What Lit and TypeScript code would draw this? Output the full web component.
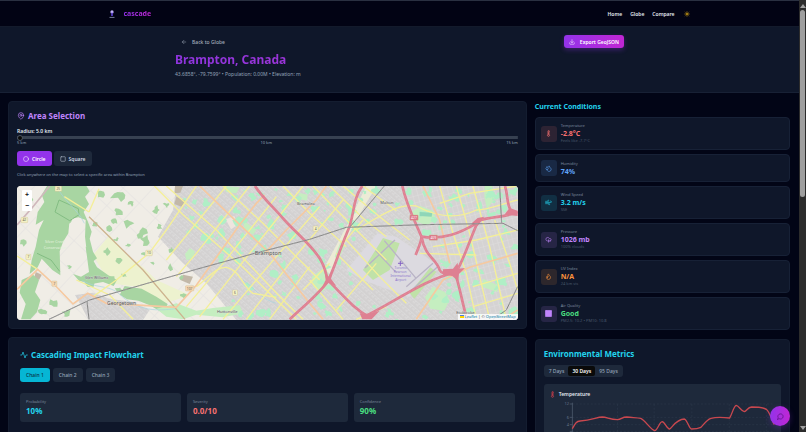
import { LitElement, html, svg, css, nothing, type TemplateResult } from "lit";
import { customElement, property, state } from "lit/decorators.js";
import { classMap } from "lit/directives/class-map.js";

const ICONS: Record<string, TemplateResult> = {
  pin: svg`<path d="M20 10c0 6-8 12-8 12s-8-6-8-12a8 8 0 0 1 16 0Z"/><circle cx="12" cy="10" r="3"/>`,
  back: svg`<path d="m12 19-7-7 7-7M19 12H5"/>`,
  download: svg`<path d="M21 15v4a2 2 0 0 1-2 2H5a2 2 0 0 1-2-2v-4M7 10l5 5 5-5M12 15V3"/>`,
  circle: svg`<circle cx="12" cy="12" r="10"/>`,
  square: svg`<rect x="3" y="3" width="18" height="18" rx="2"/>`,
  activity: svg`<path d="M22 12h-4l-3 9L9 3l-3 9H2"/>`,
  thermo: svg`<path d="M14 4v10.5a4 4 0 1 1-4 0V4a2 2 0 0 1 4 0ZM12 9v8"/>`,
  drops: svg`<path d="M7 16.3c2.200 0 4-1.830 4-4.050 0-1.160-.57-2.260-1.710-3.190S7.290 6.750 7 5.300c-.29 1.450-1.140 2.840-2.290 3.760S3 11.100 3 12.250c0 2.220 1.800 4.050 4 4.050z"/><path d="M12.560 6.600A10.970 10.970 0 0 0 14 3.020c.5 2.500 2 4.900 4 6.500s3 3.500 3 5.500a6.980 6.980 0 0 1-11.910 4.970"/>`,
  wind: svg`<path d="M17.700 7.700a2.500 2.500 0 1 1 1.800 4.300H2M9.600 4.600A2 2 0 1 1 11 8H2M12.600 19.400A2 2 0 1 0 14 16H2"/>`,
  cloud: svg`<path d="M17.500 17H9a6 6 0 1 1 5.700-8h1.800a4 4 0 0 1 1 8ZM12 13v8"/>`,
  flame: svg`<path d="M8.500 14.500A2.500 2.500 0 0 0 11 12c0-1.380-.5-2-1-3-1.070-2.140-.22-4.050 2-6 .5 2.500 2 4.900 4 6.500s3 3.500 3 5.500a7 7 0 1 1-14 0c0-1.150.43-2.290 1-3a2.500 2.500 0 0 0 2.500 2.500z"/>`,
  block: svg`<rect x="1" y="1" width="22" height="22" rx="3" fill="currentColor"/>`,
  chat: svg`<path d="M7.900 20A9 9 0 1 0 4 16.100L2 22Z"/>`,
  sun: svg`<circle cx="12" cy="12" r="5" fill="currentColor"/><path d="M12 1v3M12 20v3M1 12h3M20 12h3M4 4l2 2M18 18l2 2M4 20l2-2M18 6l2-2"/>`,
};

const icon = (name: string) => html`<svg class="ico" viewBox="0 0 24 24" fill="none" stroke="currentColor"
  stroke-width="2" stroke-linecap="round" stroke-linejoin="round" aria-hidden="true">${ICONS[name]}</svg>`;

const iconStyles = css`
  .ico { display: block; width: 8px; height: 8px; flex: none; }
  * { box-sizing: border-box; }
  button { font: inherit; border: 0; margin: 0; padding: 0; cursor: pointer; color: inherit; background: none; }
`;

function seeded(seed: number) {
  let s = seed;
  return () => (s = (s * 16807) % 2147483647) / 2147483647;
}

function blob(cx: number, cy: number, r: number, rnd: () => number): string {
  const pts: string[] = [];
  for (let i = 0; i < 9; i++) {
    const a = (i / 9) * Math.PI * 2;
    const d = r * (0.35 + rnd() * 0.95);
    pts.push(`${Math.round(cx + Math.cos(a) * d * 1.1)} ${Math.round(cy + Math.sin(a) * d)}`);
  }
  return `M${pts.join("L")}Z`;
}

const rnd = seeded(4711);
const URBAN_PARKS = Array.from({ length: 230 }, () => {
  const x = 520 + rnd() * 1000;
  const y = 18 + rnd() * 402;
  const inAirport = x > 1040 && x < 1290 && y > 160 && y < 350;
  const inFields = x < 350 + y * 0.85;
  return inAirport || inFields ? "" : blob(x, y, 4 + rnd() * 11, rnd);
}).join("");

const FIELD_WOODS = [
  [330, 45, 22], [325, 95, 13], [315, 125, 10], [297, 143, 11], [360, 130, 14], [395, 160, 15], [410, 182, 15],
  [365, 70, 9], [440, 90, 13], [470, 75, 9], [290, 215, 11], [325, 240, 12], [355, 195, 8], [320, 180, 7],
  [485, 210, 8], [430, 250, 8], [480, 262, 10], [515, 295, 8], [450, 140, 8], [255, 135, 8], [270, 45, 12],
  [345, 285, 8], [300, 300, 14], [265, 285, 12], [240, 310, 14], [520, 345, 10], [330, 330, 12], [400, 222, 7],
  [180, 260, 7], [175, 120, 14], [60, 60, 8], [40, 190, 10], [100, 395, 14], [130, 370, 12], [170, 400, 12],
].map(([x, y, r]) => blob(x, y, r, rnd)).join("");

const FOREST = [
  "M112 18L230 18 240 34 226 50 238 72 222 96 236 128 246 155 240 176 250 215 262 235 248 246 232 222 226 170 228 120 206 112 180 118 176 160 160 186 150 214 152 286 128 270 96 236 84 262 60 282 66 240 78 200 88 150 102 120 78 134 84 96 104 66 96 44Z",
  "M36 300L70 284 88 300 76 336 92 360 82 396 62 418 34 418 48 372 30 338Z",
  "M228 200L246 206 250 240 262 262 296 286 322 300 312 318 280 306 246 312 208 302 190 282 214 290 238 276Z",
  "M345 318L396 326 440 350 474 372 462 400 420 376 386 362 352 358 330 344Z",
];
const LIGHT_PARKS = [
  "M540 205L556 214 550 236 530 240 526 222Z",
  "M440 386L500 370 560 392 610 384 690 376 700 400 640 412 560 404 520 418 470 410Z",
  "M640 18L690 22 680 40 650 36Z", "M700 120L740 150 730 164 704 146Z",
  "M906 290L948 260 962 300 940 336 912 322Z", "M866 38L894 44 892 62 872 58Z",
  "M1202 98L1232 78 1270 92 1280 118 1252 136 1212 122Z",
  "M1246 352L1270 320 1306 336 1320 360 1304 392 1262 386Z", "M1425 18L1448 18 1454 58 1432 88 1424 50Z",
  "M1420 296L1470 318 1462 336 1416 320Z", "M995 180L1005 200 985 240 975 230Z",
];
const HIGHWAYS = [
  "M736 18C760 55 790 80 820 115C860 160 900 190 928 232C948 262 950 290 956 302C1000 345 1030 385 1080 412",
  "M840 418C880 380 930 340 956 302C975 260 990 210 1012 158C1036 110 1026 60 1058 18",
  "M1060 412C1150 370 1240 300 1340 276C1366 230 1384 170 1406 122C1450 108 1490 112 1524 96",
  "M1178 18C1192 80 1218 128 1236 172C1246 230 1280 236 1290 270C1300 290 1320 270 1336 278C1350 320 1356 360 1372 418",
  "M1218 225C1225 205 1234 190 1236 170C1300 180 1350 160 1400 130",
  "M1486 18C1496 48 1490 70 1504 92",
];
const ORANGE = [
  "M22 328L84 268 138 318 190 372 234 340 290 370 400 376 500 382 560 316 690 134 740 70 765 45",
  "M570 18L690 134 780 220 900 370 940 418", "M765 220L830 150 920 60 950 18",
  "M1240 18L1290 120 1320 250", "M1220 418L1300 300 1380 262 1524 220", "M1480 418L1524 390",
];
const YELLOW = [
  "M164 50L238 96", "M238 96L268 26", "M434 18L520 104 700 262 860 418", "M470 18L620 150 830 370 880 418",
  "M640 18L760 130 930 300", "M820 18L900 100 1010 200", "M910 18L1040 150 1130 240",
  "M560 18L470 150 420 218 320 300 250 350", "M650 18L470 240", "M720 18L560 220 500 290", "M800 50L640 250 530 380",
  "M880 18L720 220 570 410", "M930 80L800 230 640 418", "M1000 60L840 250 710 418", "M900 260L780 418",
  "M1060 120L1000 190M960 250L880 330", "M1130 380L1040 418M900 300L1000 418",
  "M960 18L1060 115 1130 170", "M1000 18L1110 110 1200 180", "M1060 18L1160 92",
  "M1010 180L1110 290 1190 370", "M980 220L1090 330", "M1100 250L980 390",
  "M1040 150C1110 110 1160 70 1220 78C1280 110 1340 120 1400 90C1440 90 1480 70 1524 60", "M1230 220L1400 225",
  "M1290 18L1330 160 1370 280 1400 418", "M1340 18L1380 160 1440 418", "M1390 18L1440 200 1490 418", "M1455 120L1500 250 1524 330",
  "M1290 70L1380 40 1524 18", "M1270 200L1400 180 1524 150", "M1390 320L1524 280", "M1390 380L1524 340",
  "M200 300L300 345 370 418", "M22 228L84 268", "M560 320C600 290 620 260 650 262C690 270 700 320 730 340L800 352",
];
const RAIL = ["M118 418L240 360 420 308 560 268 735 220 900 178 1010 142 1240 134 1480 130 1524 152", "M1020 142L1124 18", "M232 364L238 418", "M1470 18L1476 128M1524 320L1490 390 1450 418"];
const WATER = ["M218 302C270 330 300 310 340 352C400 400 460 390 500 386", "M140 18C160 60 206 90 224 130", "M700 300C740 330 760 360 800 370"];
const PLACES: [number, number, number, string][] = [
  [292, 374, 15, "Georgetown"], [735, 226, 17, "Brampton"], [226, 298, 11, "Glen Williams"], [622, 399, 12, "Huttonville"],
  [862, 76, 12, "Bramalea"], [1112, 73, 12, "Malton"], [1340, 402, 12, "Etobicoke"],
];
const SHIELDS: [number, number, string, string][] = [
  [146, 26, "25", "y"], [44, 120, "42", "y"], [56, 231, "7", "y"], [134, 311, "7", "o"], [418, 219, "10", "y"],
  [540, 325, "107", "o"], [676, 338, "6", "y"], [918, 146, "4", "y"], [1213, 113, "427", "r"], [1271, 173, "409", "r"],
];

@customElement("area-map")
export class AreaMap extends LitElement {
  static styles = [iconStyles, css`
    :host { display: block; position: relative; border-radius: 4px; overflow: hidden; background: #f0ede6; }
    .map { display: block; width: 100%; height: auto; font-family: "Noto Sans", sans-serif; }
    .zoom { position: absolute; left: 5px; top: 4px; width: 10px; border-radius: 1px; background: #fff;
      display: flex; flex-direction: column; gap: 1px; }
    .zoom button { height: 10px; line-height: 10px; font-size: 7px; font-weight: 700; color: #111; }
    .credit { position: absolute; right: 0; bottom: 0; display: flex; align-items: center; gap: 1px; padding: 0 2px; height: 6px;
      background: #ffffffcc; font-size: 4px; line-height: 6px; color: #333; }
    .credit a { color: #0078a8; text-decoration: none; }
    .flag { width: 4px; height: 3px; background: linear-gradient(#4c7be1 50%, #ffd500 50%); }
  `];

  render() {
    return html`
      <svg class="map" viewBox="22 18 1502 402" role="img" aria-label="Map of Brampton">
        <defs>
          <pattern id="west" width="13" height="17" patternUnits="userSpaceOnUse" patternTransform="rotate(41)">
            <rect width="13" height="17" fill="#d3d1d1"/><path d="M0 0H13M0 0V12M7 8H13" stroke="#e8e7e7" stroke-width="1.500" fill="none"/>
          </pattern>
          <pattern id="east" width="15" height="20" patternUnits="userSpaceOnUse" patternTransform="rotate(-15)">
            <rect width="15" height="20" fill="#d5d3d3"/><path d="M0 0H15M0 0V20" stroke="#e6e5e5" stroke-width="1.500" fill="none"/>
          </pattern>
          <pattern id="farm" width="66" height="72" patternUnits="userSpaceOnUse" patternTransform="rotate(43)">
            <path d="M0 0H66M0 0V72" stroke="#e2dfdf" stroke-width="3" fill="none"/>
          </pattern>
        </defs>
        <rect x="22" y="18" width="1502" height="402" fill="#f0ede6"/>
        <rect x="22" y="18" width="1502" height="402" fill="url(#farm)"/>
        <path d="M250 225L300 165 350 225 400 262 440 300 540 345 470 370 380 320 300 310Z" fill="#edf2cf"/>
        <path d="M500 18L490 90 445 170 520 250 590 310 640 370 680 420H1524V18Z" fill="url(#west)"/>
        <path d="M1180 18H1524V420H1380L1310 282 1236 172Z" fill="url(#east)"/>
        <path d="M196 345L250 338 300 356 370 366 420 390 400 420H236L216 380Z" fill="url(#west)"/>
        <path d="M1070 18L1100 18 1040 120 960 280 940 270 1010 140Z" fill="#ecebd6"/>
        <path d="M500 50L528 62 516 80 494 72ZM496 18L520 18 512 38 494 40ZM520 284L550 290 540 312 512 300ZM78 276L96 284 88 300 74 292Z" fill="#c2b8a8"/>
        <path d="M648 118L674 108 684 134 664 148Z" fill="#eee5df"/>
        ${FOREST.map((d) => svg`<path d=${d} fill="#a8d5a2"/>`)}
        <path d=${FIELD_WOODS} fill="#a8d5a2"/>
        ${LIGHT_PARKS.map((d) => svg`<path d=${d} fill="#c5eec0"/>`)}
        <path d=${URBAN_PARKS} fill="#b0efc6"/>
        <path d="M1010 270L1104 160 1160 170 1290 260 1200 350 1140 330 1060 300Z" fill="#dcdae0"/>
        <path d="M1060 270L1120 174 1170 190 1140 270 1090 300ZM1200 340L1262 262 1280 276 1214 356Z" fill="#c0e2a8"/>
        <path d="M1066 264L1156 180M1098 212L1160 278M1124 182L1220 296M1190 320L1270 250M1204 332L1284 260" stroke="#b9b3c6" stroke-width="4" fill="none"/>
        <path d="M148 60L206 86 208 104 180 122 136 96ZM82 220L124 240 150 274" stroke="#83bd83" stroke-width="3" fill="none"/>
        ${WATER.map((d) => svg`<path d=${d} stroke="#a8d3df" stroke-width="2" fill="none"/>`)}
        <path d="M1230 96L1268 98 1266 110 1230 108Z" fill="#8fd6b8"/>
        ${YELLOW.map((d) => svg`<path d=${d} stroke="#f4ef98" stroke-width="4" fill="none"/>`)}
        <path d="M22 135L70 80 120 18" stroke="#d0b8bc" stroke-width="5" fill="none"/>
        <path d="M238 110L400 270 526 418" stroke="#cdb38e" stroke-width="4" fill="none"/>
        ${ORANGE.map((d) => svg`<path d=${d} stroke="#f6c9a0" stroke-width="5" fill="none"/>`)}
        ${HIGHWAYS.map((d) => svg`<path d=${d} stroke="#de8092" stroke-width="8" fill="none"/>`)}
        ${HIGHWAYS.map((d) => svg`<path d=${d} stroke="#e590a0" stroke-width="2" stroke-dasharray="9 5" fill="none"/>`)}
        <g fill="#de8092">
          <path d="M944 270L956 290 970 266 964 296 980 318 956 308 936 324 948 300Z"/>
          <path d="M1050 400L1080 402 1110 392 1086 418 1058 418Z"/>
          <path d="M1300 268L1330 266 1344 248 1346 266 1366 264 1348 282 1346 304 1328 288 1300 284Z"/>
          <path d="M1386 130L1404 114 1424 110 1404 138Z"/><path d="M1484 104L1500 84 1524 92 1524 108Z"/>
        </g>
        ${RAIL.map((d) => svg`<path d=${d} stroke="#858585" stroke-width="3" fill="none"/><path d=${d} stroke="#aaa" stroke-width="2" stroke-dasharray="12 12" fill="none"/>`)}
        ${SHIELDS.map(([x, y, t, k]) => {
          const w = 10 + t.length * 5;
          const fill = k === "r" ? "#dd7689" : k === "o" ? "#f7d7b3" : "#f4f1c4";
          return svg`<rect x=${x - w / 2} y=${y - 8} width=${w} height="16" rx="2" fill=${fill} stroke="#c9b98a"/>
            <text x=${x} y=${y + 4} font-size="10" text-anchor="middle" fill=${k === "r" ? "#fff" : "#665"}>${t}</text>`;
        })}
        ${PLACES.map(([x, y, s, t]) => svg`<text x=${x} y=${y} font-size=${s} fill="#555" stroke="#e4e4e4" stroke-width="1" paint-order="stroke">${t}</text>`)}
        <text font-size="10" text-anchor="middle" fill="#8b74cc">
          <tspan x="1173" y="268">Toronto</tspan><tspan x="1173" y="280">Pearson</tspan>
          <tspan x="1173" y="292">International</tspan><tspan x="1173" y="304">Airport</tspan>
        </text>
        <path d="M1172 243v15M1165 250h15" stroke="#8461c4" stroke-width="3"/>
        <text font-size="11" text-anchor="middle" fill="#e4f3df"><tspan x="136" y="190">Silver Creek</tspan><tspan x="136" y="206">Conservation</tspan></text>
      </svg>
      <div class="zoom"><button aria-label="Zoom in">+</button><button aria-label="Zoom out">−</button></div>
      <div class="credit"><span class="flag"></span><a href="#leaflet">Leaflet</a> | © <a href="#osm">OpenStreetMap</a></div>
    `;
  }
}

@customElement("condition-card")
export class ConditionCard extends LitElement {
  @property() label = "";
  @property() value = "";
  @property() note = "";
  @property() glyph = "";

  static styles = [iconStyles, css`
    :host { display: flex; align-items: center; gap: 4px; padding: 5px; border: 1px solid #172136; border-radius: 4px; background: #0f172a; }
    .badge { display: grid; place-items: center; width: 16px; height: 16px; border-radius: 3px;
      background: color-mix(in srgb, currentColor 13%, transparent); }
    .badge .ico { width: 7px; height: 7px; }
    .violet { color: #c084fc; }
    .label, .note { font-size: 4px; line-height: 6px; color: #7a889d; }
    .note { color: #4a576b; }
    .value { font-size: 7px; line-height: 9px; font-weight: 700; }
    p { margin: 0; }
  `];

  render() {
    return html`<span class=${classMap({ badge: true, violet: this.glyph === "block" })}>${icon(this.glyph)}</span>
      <div><p class="label">${this.label}</p><p class="value">${this.value}</p>${this.note ? html`<p class="note">${this.note}</p>` : nothing}</div>`;
  }
}

const CONDITIONS = [
  { label: "Temperature", value: "-2.8°C", note: "Feels like -7.7°C", glyph: "thermo", tone: "red" },
  { label: "Humidity", value: "74%", note: "", glyph: "drops", tone: "blue" },
  { label: "Wind Speed", value: "3.2 m/s", note: "SSE", glyph: "wind", tone: "cyan" },
  { label: "Pressure", value: "1026 mb", note: "100% clouds", glyph: "cloud", tone: "purple" },
  { label: "UV Index", value: "N/A", note: "24 km vis", glyph: "flame", tone: "orange" },
  { label: "Air Quality", value: "Good", note: "PM2.5: 10.2 • PM10: 10.8", glyph: "block", tone: "green" },
];

const STATS = [
  { label: "Probability", value: "10%", tone: "cyan" },
  { label: "Severity", value: "0.0/10", tone: "red" },
  { label: "Confidence", value: "90%", tone: "green" },
];

@customElement("app-root")
export class AppRoot extends LitElement {
  @state() private shape = "Circle";
  @state() private chain = "Chain 1";
  @state() private range = "30 Days";
  @state() private radius = 5;

  static styles = [iconStyles, css`
    :host { display: flex; height: 100vh; overflow: hidden; background: #020516; color: #e2e8f0;
      font-family: "Noto Sans", "Open Sans", sans-serif; font-size: 5px; line-height: 8px; }
    h1, h2, h3, p { margin: 0; }
    a { color: inherit; text-decoration: none; }
    .page { flex: 1; min-width: 0; height: 100%; overflow: hidden; border-top: 1px solid #2a3041; }
    .scroll { width: 7px; background: #2c2c2c; display: flex; flex-direction: column; align-items: center; justify-content: space-between; padding: 4px 0 2px; }
    .up, .down { border: 3px solid transparent; width: 0; height: 0; flex: none; }
    .up { border-top: 0; border-bottom: 4px solid #a0a0a0; }
    .down { border-bottom: 0; border-top: 4px solid #a0a0a0; }
    .thumb { width: 5px; height: 44%; margin: 2px 0 auto; border-radius: 3px; background: #9f9f9f; }

    .top { background: #020314; border-bottom: 1px solid #131a2b; }
    .bar { max-width: 586px; height: 25px; margin: 0 auto; padding-right: 3px; display: flex; align-items: center; }
    .brand { display: flex; align-items: center; gap: 7px; font-size: 7px; font-weight: 700; }
    .brand svg { width: 10px; height: 10px; }
    .grad { background: linear-gradient(90deg, #9333ea, #c026d3); background-clip: text; -webkit-background-clip: text; color: transparent; }
    nav { margin-left: auto; display: flex; align-items: center; gap: 8px; font-weight: 600; }
    .sun { color: #a07c14; margin-left: 1px; }
    .sun .ico { width: 6px; height: 6px; }

    .hero { background: #0f172a; border-bottom: 1px solid #182135; }
    .wrap { max-width: 449px; margin: 0 auto; padding: 8px 0 14px; }
    .row { display: flex; justify-content: space-between; align-items: center; }
    .back { display: flex; align-items: center; gap: 5px; padding: 0 6px; color: #a3adbd; font-weight: 500; }
    .ico { width: 6px; height: 6px; }
    .export { display: flex; align-items: center; gap: 5px; height: 13px; padding: 0 5px; border-radius: 3px; color: #fff; font-weight: 600;
      background: linear-gradient(90deg, #9333ea, #c026d3); box-shadow: 0 2px 5px #9333ea55; }
    h1 { width: max-content; margin-top: 3px; font-size: 12px; line-height: 18px; font-weight: 700;
      background: linear-gradient(90deg, #8f35df, #9b35d9); background-clip: text; -webkit-background-clip: text; color: transparent; }
    .meta { margin-top: 1px; color: #94a3b8; }

    main { display: grid; grid-template-columns: repeat(3, minmax(0, 1fr)); gap: 8px; padding: 8px 9px 8px 8px; }
    .left { grid-column: span 2; display: flex; flex-direction: column; gap: 8px; }
    .panel { border: 1px solid #141d30; border-radius: 4px; background: #0f172a; }
    .area { padding: 8px; }
    h2 { display: flex; align-items: center; gap: 3px; font-size: 8px; line-height: 12px; font-weight: 700; }
    h2 .ico { width: 8px; height: 8px; }
    .purple { color: #c084fc; } .cyan { color: #22d3ee; } .red { color: #f87171; } .green { color: #4ade80; }
    .blue { color: #60a5fa; } .orange { color: #fb923c; }
    .area label { display: block; margin-top: 5px; font-weight: 600; }
    input[type="range"] { display: block; width: 100%; height: 5px; margin: 0; appearance: none; -webkit-appearance: none;
      background: linear-gradient(#374151, #374151) center / 100% 3px no-repeat; }
    input[type="range"]::-webkit-slider-thumb { -webkit-appearance: none; width: 6px; height: 6px; border-radius: 50%; background: #0a0a0a; border: 1px solid #4b5563; }
    .ticks { display: flex; justify-content: space-between; font-size: 4px; line-height: 6px; color: #94a3b8; }
    .shapes { display: flex; gap: 2px; margin-top: 5px; }
    .shapes button { display: flex; align-items: center; gap: 3px; height: 15px; padding: 0 6px; border-radius: 3px; background: #1e293b; color: #cbd5e1; font-weight: 600; }
    .shapes .on { background: #9333ea; color: #fff; }
    .hint { margin: 5px 0 7px; font-size: 4px; color: #94a3b8; }

    .flow { padding: 11px 11px 80px; }
    .chains { display: flex; gap: 3px; margin-top: 7px; }
    .chains button { height: 14px; padding: 0 6px; border-radius: 3px; background: #1e293b; color: #94a3b8; font-weight: 500; }
    .chains .on { background: #06b6d4; color: #083344; }
    .stats { display: grid; grid-template-columns: repeat(3, 1fr); gap: 6px; margin-top: 11px; }
    .stat { padding: 5px 6px; border-radius: 3px; background: #1e293b; }
    .stat p { font-size: 4px; line-height: 7px; color: #7a889d; }
    .stat strong { display: block; font-size: 8px; line-height: 12px; }

    .conditions > h2 { font-size: 7px; }
    .cards { display: flex; flex-direction: column; gap: 4px; margin: 4px 0 9px; }
    .metrics { padding: 8px 8px 80px; }
    .tabs { display: flex; width: max-content; padding: 1px; margin-top: 5px; border-radius: 3px; background: #1e293b; }
    .tabs button { height: 10px; padding: 0 4px; border-radius: 2px; color: #94a3b8; font-weight: 500; }
    .tabs .on { background: #0a0a0a; color: #fff; font-weight: 600; }
    .chart { margin-top: 7px; border-radius: 3px; background: #1e293b; padding-top: 6px; }
    .chart h3 { display: flex; align-items: center; gap: 3px; padding-left: 5px; font-size: 5px; line-height: 8px; font-weight: 600; }
    .chart h3 .ico { color: #dc3f4c; width: 7px; height: 7px; }
    .plot { display: block; width: 100%; height: auto; }
    .fab { position: fixed; right: 16px; bottom: 6px; width: 20px; height: 20px; border-radius: 50%; display: grid; place-items: center;
      color: #4a106f; background: linear-gradient(90deg, #9333ea, #c026d3); box-shadow: 0 2px 6px #9333ea44; }
    .fab .ico { width: 7px; height: 7px; }
  `];

  private pick(items: string[], current: string, set: (v: string) => void, glyph?: (v: string) => unknown) {
    return items.map((v) => html`<button class=${classMap({ on: v === current })} @click=${() => set(v)}>${glyph ? glyph(v) : nothing}${v}</button>`);
  }

  render() {
    return html`
      <div class="page">
        <header class="top"><div class="bar">
          <a class="brand" href="#home">
            <svg viewBox="0 0 24 24" aria-hidden="true"><circle cx="12" cy="7" r="4" fill="#c4b5fd"/><path d="M10 9h4v8h-4z" fill="#5b3fd0"/><path d="M6 19h12v2H6z" fill="#8b93b5"/></svg>
            <span class="grad">cascade</span>
          </a>
          <nav><a href="#home">Home</a><a href="#globe">Globe</a><a href="#compare">Compare</a><button class="sun" aria-label="Toggle theme">${icon("sun")}</button></nav>
        </div></header>
        <section class="hero"><div class="wrap">
          <div class="row">
            <a class="back" href="#globe">${icon("back")}Back to Globe</a>
            <button class="export">${icon("download")}Export GeoJSON</button>
          </div>
          <h1>Brampton, Canada</h1>
          <p class="meta">43.6858°, -79.7599° • Population: 0.00M • Elevation: m</p>
        </div></section>
        <main>
          <div class="left">
            <section class="panel area">
              <h2 class="purple">${icon("pin")}Area Selection</h2>
              <label for="radius">Radius: ${this.radius.toFixed(1)} km</label>
              <input id="radius" type="range" min="5" max="15" .value=${String(this.radius)}
                @input=${(e: Event) => (this.radius = Number((e.target as HTMLInputElement).value))}>
              <div class="ticks"><span>5 km</span><span>10 km</span><span>15 km</span></div>
              <div class="shapes">${this.pick(["Circle", "Square"], this.shape, (v) => (this.shape = v), (v) => icon(v.toLowerCase()))}</div>
              <p class="hint">Click anywhere on the map to select a specific area within Brampton</p>
              <area-map></area-map>
            </section>
            <section class="panel flow">
              <h2 class="cyan">${icon("activity")}Cascading Impact Flowchart</h2>
              <div class="chains">${this.pick(["Chain 1", "Chain 2", "Chain 3"], this.chain, (v) => (this.chain = v))}</div>
              <div class="stats">${STATS.map((s) => html`<div class="stat"><p>${s.label}</p><strong class=${s.tone}>${s.value}</strong></div>`)}</div>
            </section>
          </div>
          <div class="conditions">
            <h2 class="cyan">Current Conditions</h2>
            <div class="cards">${CONDITIONS.map((c) => html`<condition-card class=${c.tone} label=${c.label} value=${c.value} note=${c.note} glyph=${c.glyph}></condition-card>`)}</div>
            <section class="panel metrics">
              <h2 class="cyan">Environmental Metrics</h2>
              <div class="tabs">${this.pick(["7 Days", "30 Days", "95 Days"], this.range, (v) => (this.range = v))}</div>
              <div class="chart">
                <h3>${icon("thermo")}Temperature</h3>
                <svg class="plot" viewBox="42 190 711 180" role="img" aria-label="Temperature over 30 days">
                  <path d="M127 208H730M127 248H730M127 270H730M127 290H730M262 208V370M372 208V370M485 208V370M597 208V370M708 208V370" stroke="#2c384a" stroke-width="2" stroke-dasharray="6 5"/>
                  <path d="M127 204V370M119 208H127M119 248H127M119 270H127M119 290H127" stroke="#566377" stroke-width="2"/>
                  <g font-size="12" fill="#64748b" text-anchor="end"><text x="117" y="212">12</text><text x="117" y="252">6</text><text x="117" y="274">4</text></g>
                  <path d="M127 282C135 268 138 260 150 259C185 258 200 247 217 247C232 248 240 255 262 255C275 254 275 247 290 247C310 249 322 249 332 251C344 256 362 285 374 288C382 286 388 262 396 261C404 262 410 282 418 283C426 280 436 254 463 253C472 256 476 282 484 283C498 283 504 282 512 278C522 268 528 256 542 251C560 246 582 248 598 250C606 238 610 214 618 212C626 214 634 230 642 231C650 228 652 218 664 217C680 217 698 217 708 224C720 234 726 262 732 270" fill="none" stroke="#c9484f" stroke-width="4"/>
                </svg>
              </div>
            </section>
          </div>
        </main>
      </div>
      <div class="scroll" aria-hidden="true"><span class="up"></span><span class="thumb"></span><span class="down"></span></div>
      <button class="fab" aria-label="Open chat">${icon("chat")}</button>
    `;
  }
}
